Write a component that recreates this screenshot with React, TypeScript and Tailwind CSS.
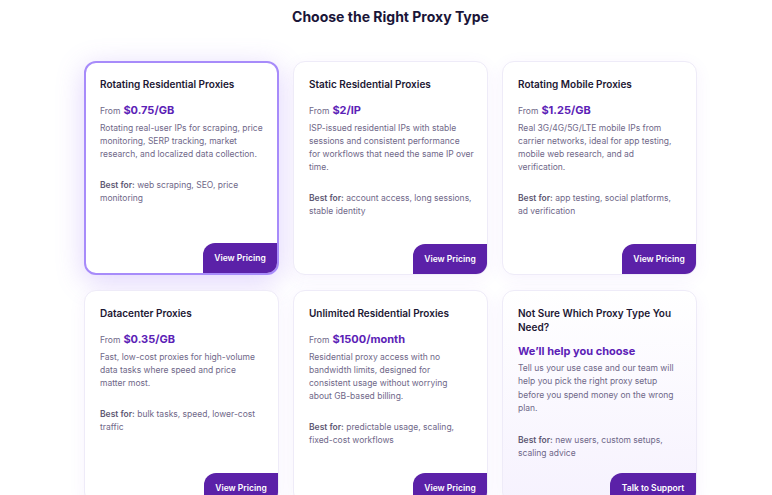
import React from "react";

type Card = {
  title: string[];
  price?: string;
  sub?: string;
  desc: string[];
  best: string[];
  cta: string;
  ctaW: string;
  highlight?: boolean;
  tinted?: boolean;
};

const cards: Card[] = [
  {
    title: ["Rotating Residential Proxies"],
    price: "$0.75/GB",
    desc: [
      "Rotating real-user IPs for scraping, price",
      "monitoring, SERP tracking, market",
      "research, and localized data collection.",
    ],
    best: ["web scraping, SEO, price", "monitoring"],
    cta: "View Pricing",
    ctaW: "w-[74px]",
    highlight: true,
  },
  {
    title: ["Static Residential Proxies"],
    price: "$2/IP",
    desc: [
      "ISP-issued residential IPs with stable",
      "sessions and consistent performance",
      "for workflows that need the same IP over",
      "time.",
    ],
    best: ["account access, long sessions,", "stable identity"],
    cta: "View Pricing",
    ctaW: "w-[74px]",
  },
  {
    title: ["Rotating Mobile Proxies"],
    price: "$1.25/GB",
    desc: [
      "Real 3G/4G/5G/LTE mobile IPs from",
      "carrier networks, ideal for app testing,",
      "mobile web research, and ad",
      "verification.",
    ],
    best: ["app testing, social platforms,", "ad verification"],
    cta: "View Pricing",
    ctaW: "w-[74px]",
  },
  {
    title: ["Datacenter Proxies"],
    price: "$0.35/GB",
    desc: [
      "Fast, low-cost proxies for high-volume",
      "data tasks where speed and price",
      "matter most.",
    ],
    best: ["bulk tasks, speed, lower-cost", "traffic"],
    cta: "View Pricing",
    ctaW: "w-[74px]",
  },
  {
    title: ["Unlimited Residential Proxies"],
    price: "$1500/month",
    desc: [
      "Residential proxy access with no",
      "bandwidth limits, designed for",
      "consistent usage without worrying",
      "about GB-based billing.",
    ],
    best: ["predictable usage, scaling,", "fixed-cost workflows"],
    cta: "View Pricing",
    ctaW: "w-[74px]",
  },
  {
    title: ["Not Sure Which Proxy Type You", "Need?"],
    sub: "We\u2019ll help you choose",
    desc: [
      "Tell us your use case and our team will",
      "help you pick the right proxy setup",
      "before you spend money on the wrong",
      "plan.",
    ],
    best: ["new users, custom setups,", "scaling advice"],
    cta: "Talk to Support",
    ctaW: "w-[86px]",
    tinted: true,
  },
];

function ProxyCard({ c }: { c: Card }) {
  const base =
    "relative flex flex-col h-[214px] rounded-[12px] overflow-hidden whitespace-nowrap";
  const look = c.highlight
    ? "border-2 border-[#a78bfa] bg-white shadow-[0_6px_28px_rgba(139,92,246,0.28)] pt-[14px] pl-[14px]"
    : c.tinted
    ? "border border-[#eeebf8] bg-gradient-to-b from-white to-[#f6f2fe] shadow-[0_4px_18px_rgba(124,58,237,0.06)] pt-[15px] pl-[15px]"
    : "border border-[#eeebf8] bg-white shadow-[0_4px_18px_rgba(124,58,237,0.06)] pt-[15px] pl-[15px]";
  return (
    <div className={`${base} ${look}`}>
      <div className="flex flex-col text-[10px] leading-[14px] font-semibold text-[#1c1733]">
        {c.title.map((t) => (
          <span key={t}>{t}</span>
        ))}
      </div>
      {c.price && (
        <div className="mt-[11px] leading-[16px] flex items-baseline gap-[3px]">
          <span className="text-[8.5px] text-[#6f6889]">From</span>
          <span className="text-[11px] font-bold text-[#5b21b6]">{c.price}</span>
        </div>
      )}
      {c.sub && (
        <div className="mt-[9px] leading-[16px] text-[11px] font-bold text-[#5b21b6]">
          {c.sub}
        </div>
      )}
      <div
        className={`mt-[3px] flex flex-col text-[8.5px] text-[#6f6889] ${
          c.tinted ? "leading-[13.4px]" : "leading-[13px]"
        }`}
      >
        {c.desc.map((d) => (
          <span key={d}>{d}</span>
        ))}
      </div>
      <div className="mt-[18px] flex flex-col text-[8.5px] leading-[13px] text-[#6f6889]">
        <span>
          <span className="font-semibold text-[#5e5873]">Best for:</span> {c.best[0]}
        </span>
        <span>{c.best[1]}</span>
      </div>
      <div
        className={`absolute right-0 bottom-0 h-[30px] ${c.ctaW} flex items-center justify-center rounded-tl-[12px] bg-[#5b21a8] text-white text-[8.5px] font-semibold`}
      >
        {c.cta}
      </div>
    </div>
  );
}

export default function App() {
  return (
    <div
      className="w-[772px] h-[495px] overflow-hidden bg-white relative"
      style={{ fontFamily: "Inter, 'Noto Sans', sans-serif" }}
    >
      <h1 className="pt-[8px] text-center text-[14px] leading-[18px] font-bold text-[#1a1538] pl-[9px]">
        Choose the Right Proxy Type
      </h1>
      <div className="ml-[84px] mt-[35px] w-[613px] grid grid-cols-3 gap-x-[14px] gap-y-[15px]">
        {cards.map((c) => (
          <ProxyCard key={c.title[0]} c={c} />
        ))}
      </div>
    </div>
  );
}
